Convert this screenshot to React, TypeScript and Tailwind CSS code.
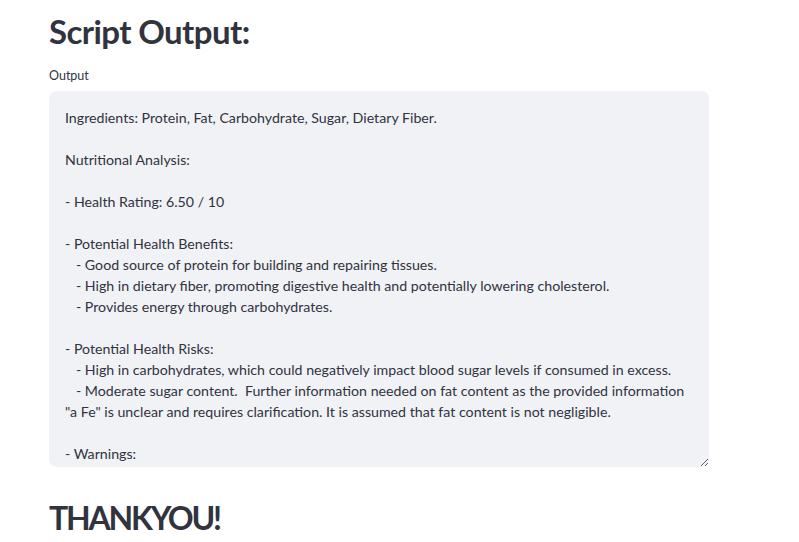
const outputText = `Ingredients: Protein, Fat, Carbohydrate, Sugar, Dietary Fiber.

Nutritional Analysis:

- Health Rating: 6.50 / 10

- Potential Health Benefits:
   - Good source of protein for building and repairing tissues.
   - High in dietary fiber, promoting digestive health and potentially lowering cholesterol.
   - Provides energy through carbohydrates.

- Potential Health Risks:
   - High in carbohydrates, which could negatively impact blood sugar levels if consumed in excess.
   - Moderate sugar content.  Further information needed on fat content as the provided information "a Fe" is unclear and requires clarification. It is assumed that fat content is not negligible.

- Warnings:
   - Individuals with diabetes should monitor their intake.
   - Those with allergies should check the full ingredient list.`;

export default function App() {
  return (
    <div className="min-h-screen bg-white text-[#31333f] font-['Lato',sans-serif]">
      <div className="ml-[49px] w-[660px] pt-[10px]">
        {/* Header */}
        <h2 className="text-[33px] leading-[42px] font-bold tracking-[-0.6px]">
          Script Output:
        </h2>

        {/* Text area */}
        <label className="block mt-[16px] text-[12.5px] leading-[16px]">Output</label>
        <textarea
          readOnly
          value={outputText}
          className="block mt-[7px] w-full h-[376px] rounded-lg bg-[#f0f2f6] px-4 pt-4 text-[14.2px] leading-[21px] whitespace-pre-wrap overflow-hidden resize-y outline-none font-['Lato',sans-serif] text-[#31333f]"
        />

        {/* Footer */}
        <h2 className="mt-[31px] text-[32px] leading-[40px] font-bold tracking-[-2.2px]">
          THANKYOU!
        </h2>
      </div>
    </div>
  );
}
